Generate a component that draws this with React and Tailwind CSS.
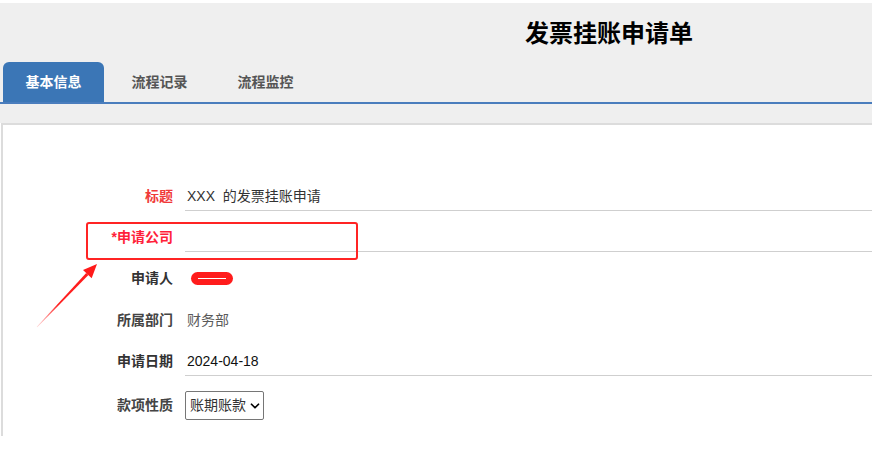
import { ChevronDown } from 'lucide-react'

const font = { fontFamily: '"Liberation Sans", "Noto Sans CJK SC", sans-serif' }

function Row({ label, labelClass = 'text-[#333]', children, underline, height = 'h-[41px]' }) {
  return (
    <div className={`flex items-center ${height}`}>
      <div className={`w-[170px] shrink-0 text-right text-[14px] font-bold ${labelClass}`}>{label}</div>
      <div
        className={`ml-[12px] flex-1 h-[28px] flex items-center pl-[2px] text-[14px] ${
          underline ? 'border-b border-[#cfcfcf]' : ''
        }`}
      >
        {children}
      </div>
    </div>
  )
}

function Annotation() {
  return (
    <>
      {/* highlight box */}
      <div className="absolute left-[86px] top-[222px] w-[272px] h-[38px] border-[2.5px] border-[#ff2424] rounded-[3px]" />
      {/* arrow */}
      <svg className="absolute left-0 top-0 pointer-events-none" width="140" height="340" viewBox="0 0 140 340">
        <defs>
          <linearGradient id="arr" x1="37" y1="327" x2="97" y2="264" gradientUnits="userSpaceOnUse">
            <stop offset="0" stopColor="#ff3b3b" stopOpacity="0.2" />
            <stop offset="0.35" stopColor="#ff2020" />
            <stop offset="1" stopColor="#ff1a1a" />
          </linearGradient>
        </defs>
        <polygon points="37.2,327.2 36.8,326.8 86.2,273.1 88.4,275.1" fill="url(#arr)" />
        <polygon points="97,264 83,270 91.7,278.2" fill="#ff1a1a" />
      </svg>
    </>
  )
}

export default function App() {
  return (
    <div className="w-[872px] h-[474px] bg-white overflow-hidden relative" style={font}>
      {/* header */}
      <div className="mt-[3px] bg-[#efefef]">
        <div className="h-[59px] pl-[525px] pt-[15px]">
          <h1 className="text-[24px] font-bold text-black leading-[32px]">发票挂账申请单</h1>
        </div>
        <div className="flex items-end h-[40px] pl-[3px] gap-[5px]">
          <div className="w-[101px] h-[40px] bg-[#3b76b6] rounded-t-[6px] flex items-center justify-center text-[14px] font-bold text-white">
            基本信息
          </div>
          <div className="w-[101px] h-[40px] flex items-center justify-center text-[14px] font-bold text-[#555]">
            流程记录
          </div>
          <div className="w-[101px] h-[40px] flex items-center justify-center text-[14px] font-bold text-[#555]">
            流程监控
          </div>
        </div>
        <div className="h-[2px] bg-[#4a7dbd]" />
        <div className="h-[19px]" />
      </div>

      {/* form panel */}
      <div className="ml-[1px] h-[313px] bg-white border-t-2 border-l-2 border-[#dcdcdc] pt-[51px]">
        <Row label="标题" labelClass="text-[#f03a3a]" underline>
          <span className="text-[#333]">XXX&nbsp; 的发票挂账申请</span>
        </Row>
        <Row label="*申请公司" labelClass="text-[#ff1f3a]" underline />
        <Row label="申请人">
          <span className="ml-[4px] w-[42px] h-[13px] rounded-full bg-[#ff1c1c] flex items-center justify-center">
            <span className="w-[28px] h-[1px] bg-white" />
          </span>
        </Row>
        <Row label="所属部门" labelClass="text-[#444]" height="h-[42px]">
          <span className="text-[#5a5a5a]">财务部</span>
        </Row>
        <Row label="申请日期" underline>
          <span className="text-[#111]">2024-04-18</span>
        </Row>
        <div className="flex items-center h-[47px]">
          <div className="w-[170px] shrink-0 text-right text-[14px] font-bold text-[#444]">款项性质</div>
          <div className="ml-[12px] w-[79px] h-[29px] border border-[#767676] rounded-[2px] flex items-center pl-[4px] gap-[2px] text-[14px] text-[#333]">
            <span>账期账款</span>
            <ChevronDown size={14} strokeWidth={3} className="text-black" />
          </div>
        </div>
      </div>

      <Annotation />
    </div>
  )
}
